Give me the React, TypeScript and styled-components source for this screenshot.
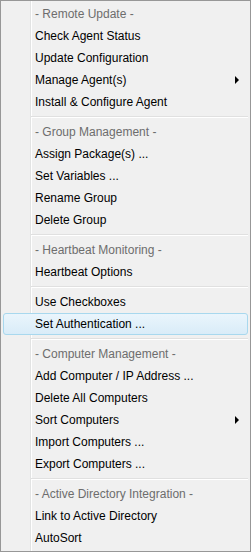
import React from "react";
import styled, { createGlobalStyle } from "styled-components";

const GlobalStyle = createGlobalStyle`
  html, body {
    margin: 0;
    padding: 0;
    background: #ffffff;
  }
`;

type Entry =
  | { kind: "header"; label: string }
  | { kind: "item"; label: string; submenu?: boolean; active?: boolean }
  | { kind: "sep" };

const entries: Entry[] = [
  { kind: "header", label: "- Remote Update -" },
  { kind: "item", label: "Check Agent Status" },
  { kind: "item", label: "Update Configuration" },
  { kind: "item", label: "Manage Agent(s)", submenu: true },
  { kind: "item", label: "Install & Configure Agent" },
  { kind: "sep" },
  { kind: "header", label: "- Group Management -" },
  { kind: "item", label: "Assign Package(s) ..." },
  { kind: "item", label: "Set Variables ..." },
  { kind: "item", label: "Rename Group" },
  { kind: "item", label: "Delete Group" },
  { kind: "sep" },
  { kind: "header", label: "- Heartbeat Monitoring -" },
  { kind: "item", label: "Heartbeat Options" },
  { kind: "sep" },
  { kind: "item", label: "Use Checkboxes" },
  { kind: "item", label: "Set Authentication ...", active: true },
  { kind: "sep" },
  { kind: "header", label: "- Computer Management -" },
  { kind: "item", label: "Add Computer / IP Address ..." },
  { kind: "item", label: "Delete All Computers" },
  { kind: "item", label: "Sort Computers", submenu: true },
  { kind: "item", label: "Import Computers ..." },
  { kind: "item", label: "Export Computers ..." },
  { kind: "sep" },
  { kind: "header", label: "- Active Directory Integration -" },
  { kind: "item", label: "Link to Active Directory" },
  { kind: "item", label: "AutoSort" },
];

const Menu = styled.div`
  box-sizing: border-box;
  width: 251px;
  height: 552px;
  border: 1px solid #979797;
  padding: 2px;
  background-color: #f0f0f0;
  background-image: linear-gradient(
    to right,
    transparent 29px,
    #e2e3e3 29px,
    #e2e3e3 30px,
    #ffffff 30px,
    #ffffff 31px,
    transparent 31px
  );
  display: flex;
  flex-direction: column;
  font-family: "Liberation Sans", Arial, sans-serif;
  font-size: 12px;
`;

const Row = styled.div<{ $active?: boolean; $header?: boolean }>`
  box-sizing: border-box;
  height: 22px;
  display: flex;
  align-items: center;
  padding: 0 8px 0 31px;
  border: 1px solid ${(p) => (p.$active ? "#a8d8ee" : "transparent")};
  border-radius: 3px;
  background: ${(p) =>
    p.$active ? "linear-gradient(to bottom, #eaf5fc, #d9ecf8)" : "transparent"};
  color: ${(p) => (p.$header ? "#6d6d6d" : "#000000")};
  white-space: nowrap;
`;

const Label = styled.span`
  flex: 1;
`;

const Arrow = styled.span`
  width: 0;
  height: 0;
  border-top: 4px solid transparent;
  border-bottom: 4px solid transparent;
  border-left: 4px solid #000000;
`;

const Separator = styled.div`
  box-sizing: border-box;
  height: 8px;
  margin-left: 28px;
  padding-top: 3px;
  &::before {
    content: "";
    display: block;
    height: 1px;
    background: #e0e0e0;
    border-bottom: 1px solid #ffffff;
  }
`;

export default function App() {
  return (
    <>
      <GlobalStyle />
      <Menu>
        {entries.map((e, i) => {
          if (e.kind === "sep") return <Separator key={i} />;
          if (e.kind === "header")
            return (
              <Row key={i} $header>
                <Label>{e.label}</Label>
              </Row>
            );
          return (
            <Row key={i} $active={e.active}>
              <Label>{e.label}</Label>
              {e.submenu && <Arrow />}
            </Row>
          );
        })}
      </Menu>
    </>
  );
}
